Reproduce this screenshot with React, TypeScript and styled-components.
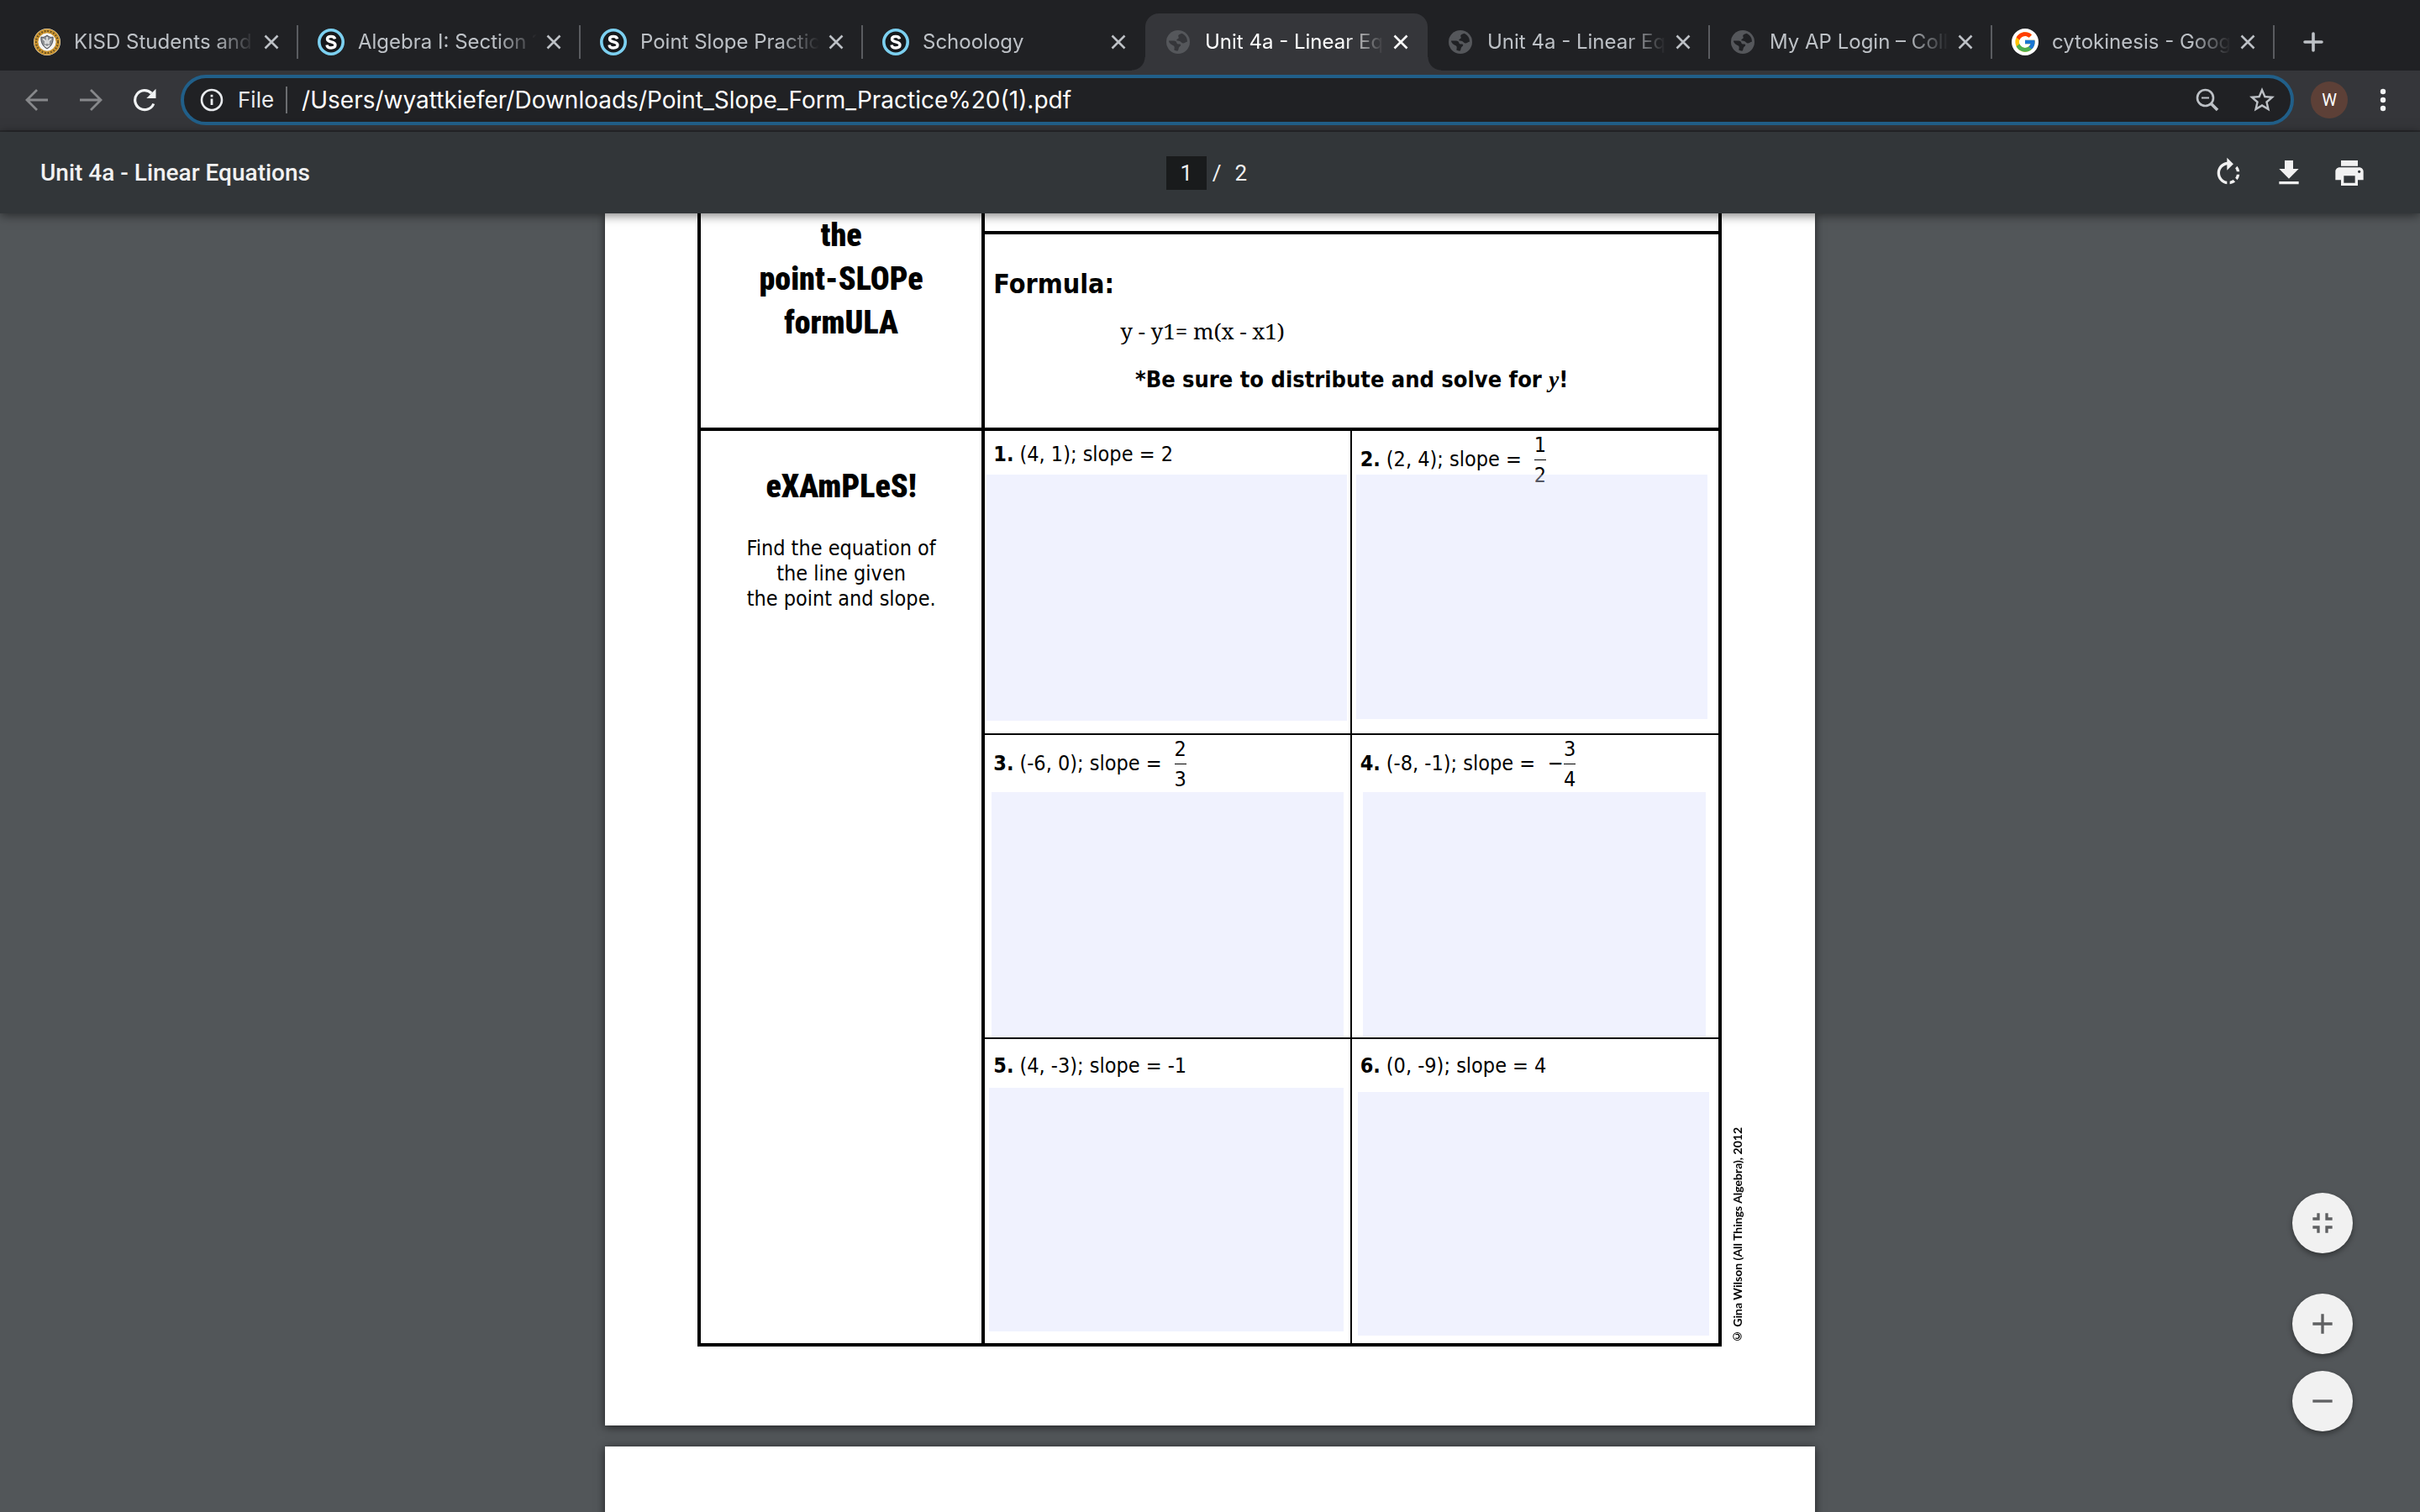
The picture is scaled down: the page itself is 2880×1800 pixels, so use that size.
import React from 'react';
import styled, { createGlobalStyle, css } from 'styled-components';
import { FcGoogle } from 'react-icons/fc';
import {
  MdRotateRight,
  MdPrint,
  MdAdd,
  MdRemove,
  MdFullscreenExit,
  MdStarBorder,
} from 'react-icons/md';

const uiFont = `Inter, "Liberation Sans", sans-serif`;
const pdfUiFont = `Roboto, "Liberation Sans", sans-serif`;
const sheetFont = `"DejaVu Sans Condensed", "DejaVu Sans", sans-serif`;
const serifFont = `"Noto Serif", "Liberation Serif", serif`;
const posterFont = `"Roboto Condensed", "Open Sans Condensed", Lato, sans-serif`;

const GlobalStyle = createGlobalStyle`
  *, *::before, *::after { box-sizing: border-box; }
  body { margin: 0; background: #525659; }
  button, input, textarea { font: inherit; color: inherit; border: 0; padding: 0; margin: 0; background: none; }
  h1, h2, p { margin: 0; font-weight: inherit; font-size: inherit; }
  svg { display: block; flex: none; }
`;

const Browser = styled.div`
  display: flex;
  flex-direction: column;
  height: 100vh;
  overflow: hidden;
  font-family: ${uiFont};
`;

/* ---------- tab strip ---------- */

const TabStrip = styled.nav`
  display: flex;
  align-items: flex-end;
  height: 84px;
  padding: 16px 16px 0 17px;
  background: #202124;
`;

const flare = css`
  content: '';
  position: absolute;
  bottom: 0;
  width: 16px;
  height: 16px;
`;

const Tab = styled.div<{ $active?: boolean }>`
  position: relative;
  display: flex;
  align-items: center;
  flex: 0 1 336px;
  min-width: 0;
  height: 68px;
  padding-left: 23px;
  color: ${(p) => (p.$active ? '#ffffff' : '#bdc1c6')};
  &:first-child {
    flex-basis: 338px;
  }
  ${(p) =>
    p.$active &&
    css`
      background: #35363a;
      border-radius: 16px 16px 0 0;
      &::before {
        ${flare}
        left: -16px;
        background: radial-gradient(circle at 0 0, transparent 15px, #35363a 16px);
      }
      &::after {
        ${flare}
        right: -16px;
        background: radial-gradient(circle at 100% 0, transparent 15px, #35363a 16px);
      }
    `}
`;

const Favicon = styled.span`
  display: grid;
  place-items: center;
  flex: none;
  width: 32px;
  height: 32px;
`;

const WhiteDisc = styled(Favicon)`
  border-radius: 50%;
  background: #ffffff;
`;

const TabTitle = styled.span`
  flex: 1;
  min-width: 0;
  margin: 0 4px 0 16px;
  overflow: hidden;
  white-space: nowrap;
  font-size: 24px;
  line-height: 32px;
  mask-image: linear-gradient(to right, #000 calc(100% - 48px), transparent);
`;

const IconButton = styled.button<{ $size: number }>`
  display: grid;
  place-items: center;
  flex: none;
  width: ${(p) => p.$size}px;
  height: ${(p) => p.$size}px;
  cursor: pointer;
`;

const TabDivider = styled.span<{ $hidden?: boolean }>`
  flex: none;
  width: 2px;
  height: 40px;
  margin-left: 14px;
  background: ${(p) => (p.$hidden ? 'transparent' : '#5a5c60')};
`;

const NewTab = styled(IconButton)`
  align-self: center;
  margin-left: 30px;
  color: #bdc1c6;
`;

/* ---------- address row ---------- */

const AddressRow = styled.div`
  display: flex;
  align-items: center;
  height: 73px;
  padding: 0 20px 1px 12px;
  border-bottom: 2px solid #292a2d;
  background: #35363a;
  color: #f1f3f4;
`;

const NavButton = styled(IconButton)`
  &:disabled {
    color: #87888b;
  }
`;

const AddressBar = styled.form`
  display: flex;
  align-items: center;
  flex: 1;
  min-width: 0;
  height: 60px;
  margin-left: 11px;
  padding: 0 10px 0 19px;
  border: 4px solid #215f89;
  border-radius: 30px;
  background: #202124;
  font-size: 28px;
`;

const Scheme = styled.span`
  margin-left: 17px;
  padding-right: 14px;
  border-right: 2px solid #6b6d70;
  line-height: 32px;
  font-size: 26px;
  color: #e8eaed;
`;

const UrlInput = styled.input`
  flex: 1;
  min-width: 0;
  margin-left: 17px;
  height: 40px;
  color: #ffffff;
  outline: none;
`;

const BarActions = styled.div`
  display: flex;
  gap: 17px;
  color: #bdc1c6;
`;

const Avatar = styled.button`
  flex: none;
  width: 44px;
  height: 44px;
  margin: 0 18px 0 20px;
  border-radius: 50%;
  background: #5d4037;
  color: #ffffff;
  font-family: ${pdfUiFont};
  font-size: 20px;
  line-height: 44px;
  text-align: center;
`;

/* ---------- PDF toolbar ---------- */

const PdfToolbar = styled.header`
  position: relative;
  z-index: 1;
  display: grid;
  grid-template-columns: 1fr auto 1fr;
  align-items: center;
  height: 97px;
  flex: none;
  padding: 0 48px;
  background: #323639;
  box-shadow: 0 2px 12px rgba(0, 0, 0, 0.55);
  color: #f1f1f1;
  font-family: ${pdfUiFont};
  font-size: 28px;
  line-height: 40px;
`;

const DocTitle = styled.h1`
  font-weight: 500;
`;

const Pager = styled.div`
  display: flex;
  align-items: center;
  font-size: 26px;
`;

const PageInput = styled.input`
  width: 48px;
  height: 40px;
  background: #191b1c;
  text-align: center;
`;

const PageTotal = styled.span`
  display: flex;
  gap: 16px;
  margin: 0 8px 0 7px;
`;

const Tools = styled.div`
  display: flex;
  justify-content: flex-end;
  gap: 24px;
  padding-right: 12px;
`;

/* ---------- document ---------- */

const Viewer = styled.main`
  flex: 1;
  min-height: 0;
  overflow: hidden;
  display: flex;
  flex-direction: column;
  align-items: center;
  gap: 25px;
  background: #525659;
`;

const Page = styled.article`
  display: flex;
  align-items: flex-start;
  flex: none;
  width: 100%;
  max-width: 1440px;
  padding: 0 83px 94px 110px;
  background: #ffffff;
  box-shadow: 0 2px 10px rgba(0, 0, 0, 0.6);
  color: #000000;
  font-family: ${sheetFont};
  font-size: 25px;
`;

const NextPage = styled(Page)`
  min-height: 400px;
`;

const Worksheet = styled.div`
  display: grid;
  grid-template-columns: 338fr 872fr;
  flex: 1;
  border: solid #000000;
  border-width: 0 4px 4px;
`;

const TopicCell = styled.section`
  border-right: 4px solid #000000;
  border-bottom: 4px solid #000000;
  text-align: center;
`;

const ExamplesCell = styled.section`
  padding-top: 40px;
  border-right: 4px solid #000000;
  text-align: center;
`;

const Lettering = styled.h2`
  font-family: ${posterFont};
  font-weight: 900;
  font-size: 38px;
  line-height: 52px;
`;

const Directions = styled.p`
  margin-top: 33px;
  line-height: 30px;
`;

const NotesCell = styled.section`
  border-bottom: 4px solid #000000;
`;

const NotesTail = styled.div`
  height: 25px;
  border-bottom: 4px solid #000000;
`;

const FormulaBox = styled.div`
  display: flex;
  flex-direction: column;
  min-height: 230px;
  padding: 39px 10px 0;
`;

const FormulaTitle = styled.h2`
  font-weight: 700;
  font-size: 32px;
  line-height: 40px;
`;

const Equation = styled.p`
  margin: 18px 0 0 151px;
  font-family: ${serifFont};
  font-size: 26px;
  line-height: 36px;
`;

const Reminder = styled.p`
  margin-top: 24px;
  text-align: center;
  font-weight: 700;
  font-size: 27px;
  line-height: 32px;
`;

const Variable = styled.i`
  font-family: "Liberation Serif", serif;
`;

const Problems = styled.div`
  display: grid;
  grid-template-columns: 1fr 1fr;
`;

const Problem = styled.div`
  display: grid;
  min-height: 362px;
  &:nth-child(odd) {
    border-right: 2px solid #000000;
  }
  &:nth-child(-n + 4) {
    border-bottom: 2px solid #000000;
  }
`;

const Prompt = styled.label<{ $height: number }>`
  grid-area: 1 / 1;
  align-self: start;
  display: flex;
  align-items: center;
  gap: 7px;
  height: ${(p) => p.$height}px;
  padding: 4px 0 0 10px;
  line-height: 32px;
`;

const Slope = styled.span`
  display: flex;
  align-items: center;
  margin-left: 8px;
`;

const Fraction = styled.span`
  display: flex;
  flex-direction: column;
  line-height: 35px;
`;

const Numerator = styled.span`
  border-bottom: 1px solid #000000;
`;

const Answer = styled.textarea<{ $inset: string }>`
  grid-area: 1 / 1;
  z-index: 1;
  margin: ${(p) => p.$inset};
  background: rgba(217, 222, 253, 0.39);
  resize: none;
  outline: none;
`;

const Copyright = styled.p`
  align-self: flex-end;
  flex: none;
  margin: 0 0 3px 10px;
  writing-mode: vertical-rl;
  transform: rotate(180deg);
  font-family: Lato, sans-serif;
  font-weight: 700;
  font-size: 14px;
  line-height: 18px;
`;

/* ---------- zoom controls ---------- */

const ZoomControls = styled.div`
  position: fixed;
  right: 80px;
  bottom: 96px;
  z-index: 2;
  display: flex;
  flex-direction: column;
  gap: 20px;
`;

const RoundButton = styled(IconButton)`
  border-radius: 50%;
  background: #f1f1f1;
  color: #5f6062;
  box-shadow: 0 3px 6px rgba(0, 0, 0, 0.4);
  &:first-child {
    margin-bottom: 28px;
  }
`;

/* ---------- drawings ---------- */

const Seal = () => (
  <svg width="32" height="32" viewBox="0 0 32 32" aria-hidden="true">
    <circle cx="16" cy="16" r="16" fill="#f3ead0" />
    <circle cx="16" cy="16" r="13" fill="none" stroke="#c9922e" strokeWidth="5" />
    <circle cx="16" cy="16" r="13" fill="none" stroke="#5d4a24" strokeWidth="2" strokeDasharray="1.6 2" />
    <circle cx="16" cy="16" r="10.4" fill="#f4f4f4" />
    <path d="M9 10c2.500 1 4.500 0 7-2 2.500 2 4.500 3 7 2 .6 6-1.500 11-7 14-5.500-3-7.600-8-7-14z" fill="#8f9296" stroke="#4a4c55" strokeWidth="1" />
    <path d="M11 12.500l3 2v4M21 12.500l-3 2v4M13 20l3 2 3-2M16 10v8" fill="none" stroke="#eeeeee" strokeWidth="1.500" />
  </svg>
);

const Schoology = () => (
  <svg width="32" height="32" viewBox="0 0 32 32" aria-hidden="true">
    <circle cx="16" cy="16" r="14.2" fill="#16191c" stroke="#7cd0f0" strokeWidth="3.600" />
    <path
      d="M20.600 12.400c-.4-2-2-3-4.600-3-2.800 0-4.500 1.200-4.500 3.200 0 2.200 2 2.700 4.600 3.300 2.800.6 4.900 1.300 4.900 3.700 0 2.200-2 3.400-4.900 3.400-3 0-4.800-1.200-5.100-3.500"
      fill="none"
      stroke="#ffffff"
      strokeWidth="3.400"
    />
  </svg>
);

const Globe = ({ hole }: { hole: string }) => (
  <svg width="28" height="28" viewBox="0 0 28 28" aria-hidden="true">
    <circle cx="14" cy="14" r="14" fill="#55575b" />
    <path
      d="M3 12.500c2.500.3 5.500-.3 8 .6 1.500.6 1 2.600 2.200 3.200 1.400.6 3-.2 3.800.8.900 1.200-1 2.200-1.800 3.200-.8 1.100-.4 3.300-1.900 4.500-1.500-.2-3-.6-4-1.200.2-1.600.8-3.200 0-4.500-.9-1.300-2.900-1.500-4.300-2.900C3.900 15.100 3 13.900 3 12.500z"
      fill={hole}
    />
    <path
      d="M18.500 3.800c-1.500 1-4 1-4.300 2.700-.2 1.300 1 1.900.4 3-.5 1-2.400.8-2.300 2.200.2 1.500 2.500.8 3.800 1.300 1.600.6 2.200 2.500 4 2.500 1.700 0 2.800-1.700 4.800-1.800.3-4.400-2.300-8.200-6.400-9.900z"
      fill={hole}
    />
  </svg>
);

const Cross = () => (
  <svg width="18" height="18" viewBox="0 0 18 18" fill="none" stroke="currentColor" strokeWidth="2.600" aria-hidden="true">
    <path d="M1.500 1.500l15 15M16.500 1.500l-15 15" />
  </svg>
);

const Plus = () => (
  <svg width="24" height="24" viewBox="0 0 24 24" fill="none" stroke="currentColor" strokeWidth="3.600" strokeLinecap="round" aria-hidden="true">
    <path d="M12 2v20M2 12h20" />
  </svg>
);

const Arrow = ({ forward }: { forward?: boolean }) => (
  <svg width="28" height="28" viewBox="0 0 28 28" fill="none" stroke="currentColor" strokeWidth="2.800" aria-hidden="true">
    <path d={forward ? 'M1 14h24M14 2l12 12-12 12' : 'M27 14H3M14 2L2 14l12 12'} />
  </svg>
);

const Reload = () => (
  <svg width="28" height="28" viewBox="0 0 28 28" aria-hidden="true">
    <path d="M24.800 18.500A11.500 11.500 0 1 1 22.300 6" fill="none" stroke="currentColor" strokeWidth="3.200" />
    <path d="M27.500 .8V12H16.300z" fill="currentColor" />
  </svg>
);

const Info = () => (
  <svg width="28" height="28" viewBox="0 0 28 28" aria-hidden="true">
    <circle cx="14" cy="14" r="12" fill="none" stroke="#e8eaed" strokeWidth="2.600" />
    <path d="M12.600 12.500h2.800V20h-2.800zM12.600 7.800h2.800v2.800h-2.800z" fill="#e8eaed" />
  </svg>
);

const ZoomOut = () => (
  <svg width="28" height="28" viewBox="0 0 28 28" fill="none" stroke="currentColor" aria-hidden="true">
    <circle cx="11.500" cy="11.500" r="9.500" strokeWidth="2.600" />
    <path d="M7 11.500h9" strokeWidth="2" />
    <path d="M18.500 18.500l7.500 7.500" strokeWidth="3.600" />
  </svg>
);

const Dots = () => (
  <svg width="28" height="28" viewBox="0 0 28 28" fill="currentColor" aria-hidden="true">
    <circle cx="14" cy="4" r="3.200" />
    <circle cx="14" cy="14" r="3.200" />
    <circle cx="14" cy="24" r="3.200" />
  </svg>
);

const Download = () => (
  <svg width="40" height="40" viewBox="0 0 24 24" fill="currentColor" aria-hidden="true">
    <path d="M19 9h-4V3H9v6H5l7 7 7-7zM5 18v2h14v-2H5z" />
  </svg>
);

/* ---------- data ---------- */

type TabInfo = { title: string; icon: React.ReactNode; active?: boolean; noDivider?: boolean };

const google = (
  <WhiteDisc>
    <FcGoogle size={28} />
  </WhiteDisc>
);

const tabs: TabInfo[] = [
  { title: 'KISD Students and Parents', icon: <Seal /> },
  { title: 'Algebra I: Section 12', icon: <Schoology /> },
  { title: 'Point Slope Practice', icon: <Schoology /> },
  { title: 'Schoology', icon: <Schoology />, noDivider: true },
  { title: 'Unit 4a - Linear Equations', icon: <Globe hole="#35363a" />, active: true, noDivider: true },
  { title: 'Unit 4a - Linear Equations', icon: <Globe hole="#202124" /> },
  { title: 'My AP Login – College Board', icon: <Globe hole="#202124" /> },
  { title: 'cytokinesis - Google Search', icon: google },
];

type ProblemInfo = {
  point: string;
  slope?: string;
  sign?: string;
  fraction?: [number, number];
  promptHeight: number;
  inset: string;
};

const problems: ProblemInfo[] = [
  { point: '(4, 1)', slope: '2', promptHeight: 52, inset: '52px 4px 15px 2px' },
  { point: '(2, 4)', fraction: [1, 2], promptHeight: 64, inset: '52px 13px 17px 5px' },
  { point: '(-6, 0)', fraction: [2, 3], promptHeight: 64, inset: '68px 8px 0 8px' },
  { point: '(-8, -1)', sign: '−', fraction: [3, 4], promptHeight: 64, inset: '68px 15px 1px 13px' },
  { point: '(4, -3)', slope: '-1', promptHeight: 60, inset: '58px 8px 14px 5px' },
  { point: '(0, -9)', slope: '4', promptHeight: 60, inset: '63px 11px 9px 7px' },
];

export default function App() {
  return (
    <Browser>
      <GlobalStyle />
      <TabStrip aria-label="Tabs">
        {tabs.map((t, i) => (
          <Tab key={i} $active={t.active}>
            <Favicon>{t.icon}</Favicon>
            <TabTitle>{t.title}</TabTitle>
            <IconButton $size={32} aria-label="Close tab">
              <Cross />
            </IconButton>
            <TabDivider $hidden={t.noDivider} />
          </Tab>
        ))}
        <NewTab $size={32} aria-label="New tab">
          <Plus />
        </NewTab>
      </TabStrip>

      <AddressRow>
        <NavButton $size={64} disabled aria-label="Back">
          <Arrow />
        </NavButton>
        <NavButton $size={64} disabled aria-label="Forward">
          <Arrow forward />
        </NavButton>
        <NavButton $size={64} aria-label="Reload">
          <Reload />
        </NavButton>
        <AddressBar>
          <Info />
          <Scheme>File</Scheme>
          <UrlInput
            aria-label="Address"
            defaultValue="/Users/wyattkiefer/Downloads/Point_Slope_Form_Practice%20(1).pdf"
          />
          <BarActions>
            <IconButton $size={48} type="button" aria-label="Zoom">
              <ZoomOut />
            </IconButton>
            <IconButton $size={48} type="button" aria-label="Bookmark">
              <MdStarBorder size={36} />
            </IconButton>
          </BarActions>
        </AddressBar>
        <Avatar aria-label="Profile">W</Avatar>
        <IconButton $size={48} aria-label="Menu">
          <Dots />
        </IconButton>
      </AddressRow>

      <PdfToolbar>
        <DocTitle>Unit 4a - Linear Equations</DocTitle>
        <Pager>
          <PageInput aria-label="Page number" defaultValue="1" />
          <PageTotal>
            <span>/</span>
            <span>2</span>
          </PageTotal>
        </Pager>
        <Tools>
          <IconButton $size={48} aria-label="Rotate clockwise">
            <MdRotateRight size={40} />
          </IconButton>
          <IconButton $size={48} aria-label="Download">
            <Download />
          </IconButton>
          <IconButton $size={48} aria-label="Print">
            <MdPrint size={40} />
          </IconButton>
        </Tools>
      </PdfToolbar>

      <Viewer>
        <Page>
          <Worksheet>
            <TopicCell>
              <Lettering>
                the
                <br />
                point-SLOPe
                <br />
                formULA
              </Lettering>
            </TopicCell>
            <NotesCell>
              <NotesTail />
              <FormulaBox>
                <FormulaTitle>Formula:</FormulaTitle>
                <Equation>y - y1= m(x - x1)</Equation>
                <Reminder>
                  *Be sure to distribute and solve for <Variable>y</Variable>!
                </Reminder>
              </FormulaBox>
            </NotesCell>
            <ExamplesCell>
              <Lettering>eXAmPLeS!</Lettering>
              <Directions>
                Find the equation of
                <br />
                the line given
                <br />
                the point and slope.
              </Directions>
            </ExamplesCell>
            <Problems>
              {problems.map((p, i) => (
                <Problem key={i}>
                  <Prompt $height={p.promptHeight} htmlFor={`answer-${i + 1}`}>
                    <b>{i + 1}.</b>
                    <span>
                      {p.point}; slope = {p.slope}
                    </span>
                    {p.fraction && (
                      <Slope>
                        {p.sign}
                        <Fraction>
                          <Numerator>{p.fraction[0]}</Numerator>
                          <span>{p.fraction[1]}</span>
                        </Fraction>
                      </Slope>
                    )}
                  </Prompt>
                  <Answer id={`answer-${i + 1}`} $inset={p.inset} />
                </Problem>
              ))}
            </Problems>
          </Worksheet>
          <Copyright>© Gina Wilson (All Things Algebra), 2012</Copyright>
        </Page>
        <NextPage />
      </Viewer>

      <ZoomControls>
        <RoundButton $size={72} aria-label="Fit to page">
          <MdFullscreenExit size={40} />
        </RoundButton>
        <RoundButton $size={72} aria-label="Zoom in">
          <MdAdd size={40} />
        </RoundButton>
        <RoundButton $size={72} aria-label="Zoom out">
          <MdRemove size={40} />
        </RoundButton>
      </ZoomControls>
    </Browser>
  );
}
